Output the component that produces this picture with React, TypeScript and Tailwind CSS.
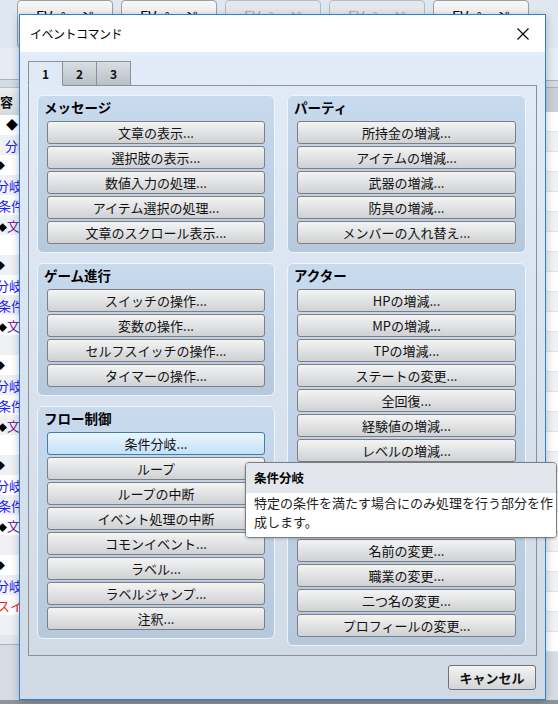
import type { ReactNode } from "react";

// Buttons per group, in the order they appear in the dialog.
const message = ["文章の表示...", "選択肢の表示...", "数値入力の処理...", "アイテム選択の処理...", "文章のスクロール表示..."];
const party = ["所持金の増減...", "アイテムの増減...", "武器の増減...", "防具の増減...", "メンバーの入れ替え..."];
const game = ["スイッチの操作...", "変数の操作...", "セルフスイッチの操作...", "タイマーの操作..."];
const flow = ["条件分岐...", "ループ", "ループの中断", "イベント処理の中断", "コモンイベント...", "ラベル...", "ラベルジャンプ...", "注釈..."];
const actor = [
  "HPの増減...",
  "MPの増減...",
  "TPの増減...",
  "ステートの変更...",
  "全回復...",
  "経験値の増減...",
  "レベルの増減...",
  "能力値の増減...",
  "スキルの増減...",
  "装備の変更...",
  "名前の変更...",
  "職業の変更...",
  "二つ名の変更...",
  "プロフィールの変更...",
];

function Btn({ label, active }: { label: string; active?: boolean }) {
  return (
    <div
      className={`flex h-[23px] items-center justify-center rounded-[3px] border text-[13px] leading-none text-[#111] ${
        active
          ? "border-[#3c7fb1] bg-linear-to-b from-[#ecf6fe] to-[#c2e1f9]"
          : "border-[#7d7f82] bg-linear-to-b from-[#f4f4f4] to-[#cfd1d4]"
      }`}
    >
      {label}
    </div>
  );
}

function Group({ title, items, active }: { title: string; items: string[]; active?: string }) {
  return (
    <div className="rounded-[6px] border border-[#eef4fb] bg-linear-to-b from-[#c8daee] to-[#b6c8dc] px-[9px] pb-[8px]">
      <div className="-ml-[3px] h-[25px] pt-[2px] text-[13.5px] font-bold leading-[18px] text-black">{title}</div>
      <div className="flex flex-col gap-[2px]">
        {items.map((l) => (
          <Btn key={l} label={l} active={l === active} />
        ))}
      </div>
    </div>
  );
}

function Tab({ children, active }: { children: ReactNode; active?: boolean }) {
  return (
    <div
      className={`relative -mb-px flex h-[25px] w-[35px] items-center justify-center border border-[#8c9096] text-[12px] font-bold ${
        active ? "z-10 border-b-[#e0eaf7] bg-[#e0eaf7]" : "-ml-px bg-linear-to-b from-[#d9dee4] to-[#b9c0c8]"
      }`}
    >
      {children}
    </div>
  );
}

// background event list, only a thin slice peeks out left of the dialog
const listRows = ["d1", "b", "d", "c", "j", "t", "e", "d", "c", "j", "t", "e", "d", "c", "j", "t", "e", "d", "c", "j", "t", "e", "d", "c", "s", "e"];

function ListRow({ kind, i }: { kind: string; i: number }) {
  const bg = i % 2 === 0 ? "bg-white" : "bg-[#eff1f4]";
  let body: ReactNode = null;
  if (kind === "d1") body = <span className="ml-[6px] text-[12px] text-black">◆</span>;
  if (kind === "b") body = <span className="ml-[5px] text-[#2222ee]">分岐</span>;
  if (kind === "d") body = <span className="-ml-[4px] text-[9px] text-black">◆</span>;
  if (kind === "c") body = <span className="-ml-[4px] text-[#2222ee]">分岐</span>;
  if (kind === "j") body = <span className="-ml-[2px] text-[#2222ee]">条件</span>;
  if (kind === "t")
    body = (
      <span className="-ml-[2px]">
        <span className="text-[9px] text-black">◆</span>
        <span className="text-[#7a2a9a]">文</span>
      </span>
    );
  if (kind === "s") body = <span className="-ml-[3px] text-[#ee2222]">スイ</span>;
  return <div className={`flex h-[20px] items-center overflow-hidden whitespace-nowrap text-[13px] leading-none ${bg}`}>{body}</div>;
}

export default function App() {
  return (
    <div className="relative h-[704px] w-[558px] overflow-hidden bg-[#dfe7f0] font-[Noto_Sans_CJK_JP,Noto_Sans,sans-serif] text-[#111]">
      {/* the editor window behind the dialog */}
      <div className="flex h-full flex-col">
        <div className="flex h-[48px] gap-[8px] pl-[17px]">
          {["on", "on", "off", "off", "on"].map((s, i) => (
            <div
              key={i}
              className={`h-[48px] w-[96px] rounded-[4px] border pt-[6px] text-center text-[14px] leading-[18px] ${
                s === "on"
                  ? "border-[#9a9ea3] bg-linear-to-b from-[#f7f7f7] to-[#dadcdf] text-black"
                  : "border-[#b7bcc2] bg-[#e4e8ec] text-[#a3a7ab]"
              }`}
            >
              EVページ
            </div>
          ))}
        </div>
        <div className="flex flex-1">
          <div className="flex w-[19px] flex-col overflow-hidden">
            <div className="h-[32px] border-b border-[#a9b0b8] bg-[#e6ecf3]" />
            <div className="h-[8px] border-b border-[#b8bec5] bg-[#d5dbe2]" />
            <div className="flex h-[27px] items-center bg-linear-to-b from-[#eceef1] to-[#d6dade] text-[13px] font-bold leading-none">容</div>
            {listRows.map((k, i) => (
              <ListRow key={i} kind={k} i={i} />
            ))}
            <div className="h-[10px] border-b border-[#aab0b7] bg-[#e3e8ee]" />
            <div className="flex-1 bg-[#d6dce3]" />
          </div>
          <div className="flex-1" />
          <div className="flex w-[12px] flex-col">
            <div className="h-[32px] bg-[#e4ecf5]" />
            <div className="h-[8px] border-y border-[#a9b0b8] bg-[#d5dbe2]" />
            <div className="h-[24px] bg-[#c9d0d8]" />
            {Array.from({ length: 27 }).map((_, i) => (
              <div key={i} className={`h-[20px] border-b border-[#dfe3e8] ${i % 2 ? "bg-[#eff1f4]" : "bg-white"}`} />
            ))}
            <div className="flex-1 bg-[#d6dce3]" />
          </div>
        </div>
        <div className="h-[4px] bg-[#8e949b]" />
      </div>

      {/* イベントコマンド dialog */}
      <div className="absolute left-[19px] top-[14px] flex h-[686px] w-[527px] flex-col border border-[#2f80d1] shadow-[0_2px_8px_rgba(0,0,0,0.25)]">
        <div className="flex h-[37px] items-center justify-between bg-white pl-[10px] pr-[16px]">
          <span className="text-[12px] leading-none tracking-[-0.5px] text-black">イベントコマンド</span>
          <svg width="12" height="12" viewBox="0 0 12 12" className="text-black">
            <path d="M0.5 0.5 L11.5 11.5 M11.5 0.5 L0.5 11.5" stroke="currentColor" strokeWidth="1.1" fill="none" />
          </svg>
        </div>
        <div className="flex flex-1 flex-col bg-linear-to-b from-[#e2ecf9] to-[#d0dae5] px-[8px] pt-[9px]">
          <div className="flex">
            <Tab active>1</Tab>
            <Tab>2</Tab>
            <Tab>3</Tab>
          </div>
          <div className="flex gap-[12px] border border-[#8c9096] pb-[9px] pl-[8px] pr-[9px] pt-[9px]">
            <div className="flex w-[238px] flex-col gap-[10px]">
              <Group title="メッセージ" items={message} />
              <Group title="ゲーム進行" items={game} />
              <Group title="フロー制御" items={flow} active="条件分岐..." />
            </div>
            <div className="flex w-[239px] flex-col gap-[10px]">
              <Group title="パーティ" items={party} />
              <Group title="アクター" items={actor} />
            </div>
          </div>
          <div className="flex flex-1 items-start justify-end pr-[1px] pt-[9px]">
            <div className="flex h-[25px] w-[88px] items-center justify-center rounded-[3px] border border-[#707275] bg-linear-to-b from-[#f4f4f4] to-[#d2d4d7] text-[13px] font-bold leading-none text-[#111]">
              キャンセル
            </div>
          </div>
        </div>
      </div>

      {/* hover tooltip for 条件分岐 */}
      <div className="absolute left-[245px] top-[462px] w-[312px] overflow-hidden rounded-[4px] border border-[#7a7d82] shadow-[0_1px_3px_rgba(0,0,0,0.2)]">
        <div className="flex h-[30px] items-center bg-[#e3e7ed] pl-[8px] text-[12.5px] font-bold leading-none text-black">条件分岐</div>
        <div className="bg-white pb-[6px] pl-[8px] text-[13px] leading-[19px] text-[#222]">
          <div className="whitespace-nowrap">特定の条件を満たす場合にのみ処理を行う部分を作</div>
          <div className="whitespace-nowrap">成します。</div>
        </div>
      </div>
    </div>
  );
}
